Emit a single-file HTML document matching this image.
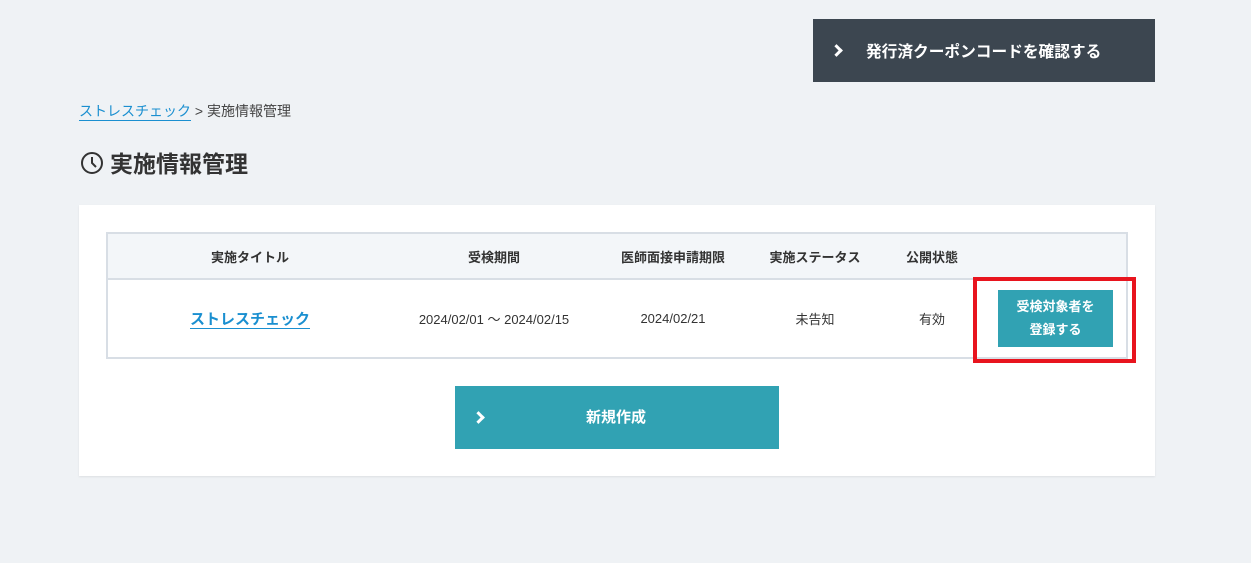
<!DOCTYPE html>
<html><head><meta charset="utf-8"><style>
*{box-sizing:border-box;margin:0;padding:0}
body{width:1251px;height:563px;background:#eff2f5;font-family:"Liberation Sans","Noto Sans CJK JP",sans-serif;position:relative;overflow:hidden;color:#333}
.abs{position:absolute}
.topbtn{left:813px;top:19px;width:342px;height:63px;background:#3c4650;color:#fff;font-weight:bold;font-size:15.7px}
.chev{position:absolute;width:9px;height:9px;border-right:3px solid #fff;border-top:3px solid #fff;transform:rotate(45deg)}
.card{left:79px;top:205px;width:1076px;height:271px;background:#fff;box-shadow:0 1px 2px rgba(0,0,0,.08)}
table{position:absolute;left:106px;top:232px;width:1022px;border-collapse:collapse;font-size:13px}
th{height:46px;background:#f3f6f9;font-weight:bold;color:#333;border-top:2px solid #d8dee5;border-bottom:2px solid #d8dee5}
td{height:79px;text-align:center;border-bottom:2px solid #d8dee5}
.tbl{position:absolute;left:106px;top:232px;width:1022px;height:127px;border:2px solid #d8dee5}
</style></head><body>
<div class="abs topbtn"><div class="chev" style="left:19px;top:27px"></div><div class="abs" style="left:53px;top:20px">発行済クーポンコードを確認する</div></div>
<div class="abs" style="left:79px;top:101px;font-size:14px"><span style="color:#1a8fd0;border-bottom:1.5px solid #1a8fd0;padding-bottom:1px">ストレスチェック</span> <span style="color:#444">&gt; 実施情報管理</span></div>
<svg class="abs" style="left:80px;top:151px" width="24" height="24" viewBox="0 0 24 24"><circle cx="12" cy="12" r="10" fill="none" stroke="#333" stroke-width="2"/><path d="M12 6v6l4 4" fill="none" stroke="#333" stroke-width="2"/></svg>
<div class="abs" style="left:110px;top:145px;font-size:23px;font-weight:bold;color:#333">実施情報管理</div>
<div class="abs card"></div>
<table>
<tr><th style="width:288px">実施タイトル</th><th style="width:200px">受検期間</th><th style="width:158px">医師面接申請期限</th><th style="width:126px">実施ステータス</th><th style="width:108px">公開状態</th><th></th></tr>
<tr><td><span style="color:#1a8fd0;font-weight:bold;font-size:15px;border-bottom:1.5px solid #1a8fd0">ストレスチェック</span></td><td>2024/02/01 〜 2024/02/15</td><td>2024/02/21</td><td>未告知</td><td>有効</td><td></td></tr>
</table>
<div class="tbl"></div>
<div class="abs" style="left:973px;top:277px;width:163px;height:86px;border:4px solid #e8141e"></div>
<div class="abs" style="left:998px;top:290px;width:115px;height:57px;background:#31a2b3;color:#fff;font-weight:bold;font-size:13px;text-align:center;line-height:23px;padding-top:5px">受検対象者を<br>登録する</div>
<div class="abs" style="left:455px;top:386px;width:324px;height:63px;background:#31a2b3;color:#fff;font-weight:bold;font-size:15px"><div class="chev" style="left:19px;top:27px"></div><div class="abs" style="left:131px;top:20px">新規作成</div></div>
</body></html>
